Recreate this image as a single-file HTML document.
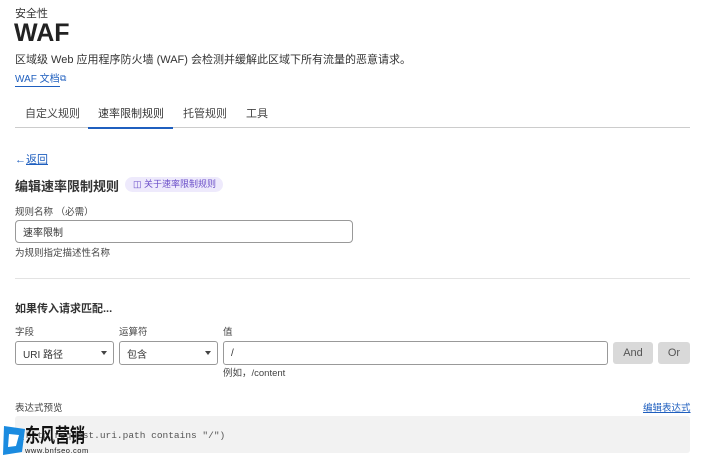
<!DOCTYPE html>
<html><head><meta charset="utf-8"><style>
*{box-sizing:border-box;margin:0;padding:0}
body{width:705px;height:462px;background:#fff;font-family:"Liberation Sans","Noto Sans CJK SC",sans-serif;color:#333;position:relative;overflow:hidden}
.a{position:absolute;white-space:nowrap}
.box{position:absolute;border:1px solid #999;border-radius:3px;background:#fff;font-size:10px;padding-left:7px;display:flex;align-items:center}
.tri{position:absolute;right:6px;top:9px;width:0;height:0;border-left:3.5px solid transparent;border-right:3.5px solid transparent;border-top:4px solid #444}
.btn{position:absolute;background:#d9d9d9;border-radius:3px;font-size:11px;color:#555;display:flex;align-items:center;justify-content:center}
</style></head><body>
<div class="a" style="left:15px;top:5px;font-size:11px;color:#333">安全性</div>
<div class="a" style="left:14px;top:19px;font-size:25px;font-weight:bold;color:#222">WAF</div>
<div class="a" style="left:15px;top:51px;font-size:11px;color:#333">区域级 Web 应用程序防火墙 (WAF) 会检测并缓解此区域下所有流量的恶意请求。</div>
<div class="a" style="left:15px;top:73px;font-size:10px;color:#1f5fbf;border-bottom:1px solid #1f5fbf;line-height:13px">WAF 文档</div>
<div class="a" style="left:60px;top:73px;font-size:9px;color:#1f5fbf">⧉</div>
<div class="a" style="left:25px;top:105px;font-size:11px;color:#444">自定义规则</div>
<div class="a" style="left:98px;top:105px;font-size:11px;color:#333">速率限制规则</div>
<div class="a" style="left:183px;top:105px;font-size:11px;color:#444">托管规则</div>
<div class="a" style="left:246px;top:105px;font-size:11px;color:#444">工具</div>
<div class="a" style="left:15px;top:127px;width:675px;height:1px;background:#ccc"></div>
<div class="a" style="left:88px;top:127px;width:85px;height:2px;background:#1f5fbf"></div>
<div class="a" style="left:15px;top:151px;font-size:11px;color:#1f5fbf">←<span style="text-decoration:underline">返回</span></div>
<div class="a" style="left:15px;top:176px;font-size:13px;font-weight:bold;color:#333">编辑速率限制规则</div>
<div class="a" style="left:125px;top:177px;height:15px;width:98px;background:#eeeafc;border-radius:8px;font-size:9px;color:#6b4fc8;padding-left:8px;line-height:15px">◫ 关于速率限制规则</div>
<div class="a" style="left:15px;top:204px;font-size:9.5px;color:#444">规则名称 （必需）</div>
<div class="box" style="left:15px;top:220px;width:338px;height:23px;border-radius:4px">速率限制</div>
<div class="a" style="left:15px;top:245px;font-size:9.5px;color:#444">为规则指定描述性名称</div>
<div class="a" style="left:15px;top:278px;width:675px;height:1px;background:#e3e3e3"></div>
<div class="a" style="left:15px;top:300px;font-size:11px;font-weight:bold;color:#333">如果传入请求匹配...</div>
<div class="a" style="left:15px;top:324px;font-size:9.5px;color:#444">字段</div>
<div class="a" style="left:119px;top:324px;font-size:9.5px;color:#444">运算符</div>
<div class="a" style="left:223px;top:324px;font-size:9.5px;color:#444">值</div>
<div class="box" style="left:15px;top:341px;width:99px;height:24px">URI 路径<span class="tri"></span></div>
<div class="box" style="left:119px;top:341px;width:99px;height:24px">包含<span class="tri"></span></div>
<div class="box" style="left:223px;top:341px;width:385px;height:24px">/</div>
<div class="btn" style="left:613px;top:342px;width:40px;height:22px">And</div>
<div class="btn" style="left:658px;top:342px;width:32px;height:22px">Or</div>
<div class="a" style="left:223px;top:365px;font-size:9.5px;color:#444">例如，/content</div>
<div class="a" style="left:15px;top:400px;font-size:9.5px;color:#444">表达式预览</div>
<div class="a" style="left:643px;top:400px;font-size:9.5px;color:#1f5fbf;text-decoration:underline">编辑表达式</div>
<div class="a" style="left:15px;top:416px;width:675px;height:37px;background:#f2f2f2;border-radius:3px"></div>
<div class="a" style="left:20px;top:430px;font-family:'Liberation Mono',monospace;font-size:9.5px;color:#555">(http.request.uri.path contains "/")</div>
<svg class="a" style="left:2px;top:424px" width="24" height="32" viewBox="0 0 24 32"><path d="M2 2 L23 5 L20 28 L1 31 Z" fill="#1a8be0"/><path d="M7 10 L17 11 L14 22 L6 23 Z" fill="#fff"/></svg>
<div class="a" style="left:25px;top:421px;font-size:15px;font-weight:bold;color:#111;transform:scaleY(1.3);transform-origin:top left">东风营销</div>
<div class="a" style="left:25px;top:446px;font-size:7.5px;color:#222;letter-spacing:0.5px">www.bnfseo.com</div>
</body></html>
